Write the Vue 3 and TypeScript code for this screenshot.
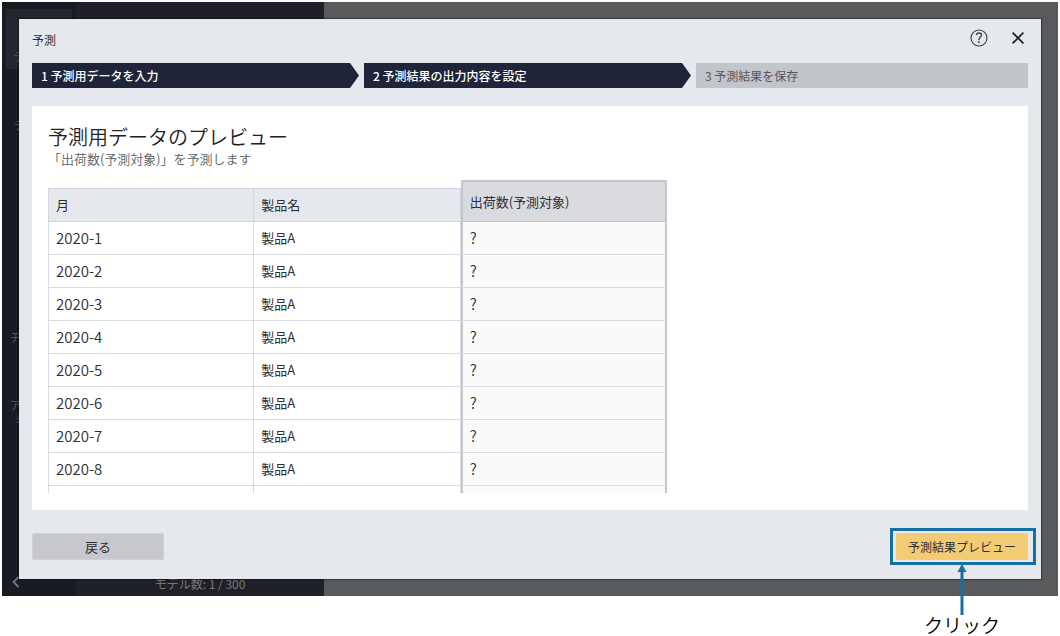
<script setup lang="ts">
interface Step {
  label: string
  done: boolean
}

interface Row {
  month: string
  product: string
  target: string
}

const steps: Step[] = [
  { label: '1 予測用データを入力', done: true },
  { label: '2 予測結果の出力内容を設定', done: true },
  { label: '3 予測結果を保存', done: false },
]

const rows: Row[] = Array.from({ length: 8 }, (_, i) => ({
  month: `2020-${i + 1}`,
  product: '製品A',
  target: '?',
}))
</script>

<template>
  <div class="page">
    <div class="stage">
      <div class="backdrop">
        <nav class="rail">
          <div class="rail-item active">デ</div>
          <div class="rail-item data">デ</div>
          <div class="rail-item team">チ</div>
          <div class="rail-item account"><span>ア</span><span class="second">ミ</span></div>
          <svg class="collapse" viewBox="0 0 8 12" width="8" height="12">
            <path d="M6.5 1 L1.5 6 L6.5 11" fill="none" stroke="#77787a" stroke-width="1.8" />
          </svg>
        </nav>
        <div class="list"><span>モデル数: 1 / 300</span></div>
        <div class="rest"></div>
      </div>

      <section class="dialog" role="dialog" aria-labelledby="dialog-title">
        <header class="head">
          <h1 id="dialog-title">予測</h1>
          <div class="tools">
            <button type="button" class="icon" aria-label="ヘルプ">
              <svg viewBox="0 0 18 18" width="18" height="18">
                <circle cx="9" cy="9" r="8" fill="none" stroke="#3c3e42" stroke-width="1.1" />
                <path
                  d="M6.4 6 C6.6 4.6 7.7 4 9 4 C10.5 4 11.5 4.8 11.5 6.1 C11.5 7.2 10.8 7.7 10.1 8.3 C9.3 9 8.9 9.5 8.9 11"
                  fill="none"
                  stroke="#3c3e42"
                  stroke-width="1.4"
                />
                <rect x="8.1" y="12.2" width="1.6" height="1.7" fill="#3c3e42" />
              </svg>
            </button>
            <button type="button" class="icon" aria-label="閉じる">
              <svg viewBox="0 0 12 12" width="12" height="12">
                <path d="M0.6 0.6 L11.4 11.4 M11.4 0.6 L0.6 11.4" stroke="#1f2024" stroke-width="1.7" />
              </svg>
            </button>
          </div>
        </header>

        <ol class="steps">
          <li v-for="step in steps" :key="step.label" :class="{ done: step.done }">{{ step.label }}</li>
        </ol>

        <main class="panel">
          <h2>予測用データのプレビュー</h2>
          <p>「出荷数(予測対象)」を予測します</p>
          <div class="preview">
            <table>
              <thead>
                <tr>
                  <th scope="col" class="first"><div>月</div></th>
                  <th scope="col"><div>製品名</div></th>
                  <th scope="col" class="target"><div>出荷数(予測対象)</div></th>
                </tr>
              </thead>
              <tbody>
                <tr v-for="row in rows" :key="row.month">
                  <td class="first month">{{ row.month }}</td>
                  <td>{{ row.product }}</td>
                  <td class="target">{{ row.target }}</td>
                </tr>
                <tr aria-hidden="true">
                  <td class="first"></td>
                  <td></td>
                  <td class="target"></td>
                </tr>
              </tbody>
            </table>
          </div>
        </main>

        <footer class="foot">
          <button type="button" class="btn">戻る</button>
          <div class="callout">
            <button type="button" class="btn primary">予測結果プレビュー</button>
            <div class="frame"></div>
            <div class="pointer">
              <svg viewBox="0 0 10 51" width="10" height="51">
                <path d="M5 0 L9.5 8 H6.5 V51 H3.5 V8 H0.5 Z" fill="#186fa3" />
              </svg>
              <span>クリック</span>
            </div>
          </div>
        </footer>
      </section>
    </div>
  </div>
</template>

<style>
body {
  margin: 0;
  background: #fff;
}
</style>

<style scoped>
* {
  box-sizing: border-box;
}

.page {
  height: 100vh;
  min-height: 400px;
  padding: 2px 2px 40px;
  font-family: 'Noto Sans CJK JP', 'Noto Sans', sans-serif;
  font-size: 13px;
  color: #2d2e32;
}

.stage {
  display: grid;
  grid-template: minmax(0, 1fr) / minmax(0, 1fr);
  height: 100%;
}

.backdrop,
.dialog {
  grid-area: 1 / 1;
}

.backdrop {
  display: flex;
  min-height: 0;
  overflow: hidden;
  color: #77787a;
}

.rail {
  display: flex;
  flex-direction: column;
  width: 74px;
  padding: 7px 4px 8px;
  background: #171b22;
  font-size: 11px;
  line-height: 14px;
  color: #5c5e62;
}

.rail-item {
  padding-left: 8px;
}

.rail-item.active {
  height: 60px;
  padding-top: 40px;
  background: #26262e;
}

.rail-item.data {
  padding-top: 49px;
}

.rail-item.team {
  padding-top: 198px;
  padding-left: 4px;
}

.rail-item.account {
  display: flex;
  flex-direction: column;
  padding-top: 54px;
  padding-left: 4px;
}

.second {
  padding-left: 4px;
}

.collapse {
  margin-top: auto;
  margin-left: 6px;
}

.list {
  display: flex;
  align-items: flex-end;
  justify-content: center;
  width: 248px;
  background: #202028;
  font-size: 12px;
  line-height: 25px;
}

.rest {
  flex: 1;
  background: #595a5c;
}

.dialog {
  display: flex;
  flex-direction: column;
  min-height: 0;
  margin: 17px;
  padding: 0 13px 19px;
  background: #e5e8ed;
  box-shadow: 0 0 1px 1px rgba(0, 0, 0, 0.35);
}

.head {
  display: flex;
  align-items: center;
  justify-content: space-between;
  height: 44px;
  padding-bottom: 2px;
}

h1 {
  margin: 0;
  font-size: 12px;
  font-weight: 400;
  line-height: 18px;
}

.tools {
  display: flex;
  align-items: center;
  gap: 24px;
  padding: 0 4px 5px 0;
}

.icon {
  display: flex;
  padding: 0;
  border: 0;
  background: none;
}

.steps {
  display: grid;
  grid-template-columns: repeat(3, 1fr);
  margin: 0;
  padding: 0;
  list-style: none;
  font-size: 12px;
  line-height: 25px;
}

.steps li {
  padding-left: 9px;
  background: #c2c5ca;
  color: #55575c;
}

.steps li.done {
  margin-right: 5px;
  background: #20243a;
  color: #fff;
  font-weight: 500;
  clip-path: polygon(0 0, calc(100% - 9px) 0, 100% 50%, calc(100% - 9px) 100%, 0 100%);
}

.panel {
  display: flex;
  flex: 1;
  flex-direction: column;
  min-height: 0;
  margin-top: 18px;
  padding: 18px 16px 17px;
  background: #fff;
}

h2 {
  margin: 0;
  font-size: 20px;
  font-weight: 350;
  line-height: 26px;
  color: #222;
}

p {
  margin: 0;
  font-weight: 350;
  line-height: 17px;
  color: #5c5e62;
}

.preview {
  flex: 1;
  min-height: 0;
  margin-top: 13px;
  overflow: hidden;
}

table {
  width: 619px;
  border-collapse: separate;
  border-spacing: 0;
  table-layout: fixed;
}

th {
  height: 41px;
  padding: 0;
  font-weight: 400;
  text-align: left;
  vertical-align: bottom;
}

th div {
  height: 34px;
  padding-left: 7px;
  border: solid #d3d6de;
  border-width: 1px 1px 1px 0;
  background: #e5e8ed;
  line-height: 32px;
}

th.first div {
  border-left-width: 1px;
}

th.target div {
  height: 42px;
  border: solid #c5c6cd;
  border-width: 2px 2px 1px;
  background: #dadbe0;
  line-height: 40px;
}

td {
  height: 33px;
  padding: 0 7px;
  border: solid #d8dbe1;
  border-width: 0 1px 1px 0;
  line-height: 32px;
}

td.first {
  border-left-width: 1px;
}

td.month {
  font-size: 15px;
  font-weight: 350;
}

td.target {
  border-right: 2px solid #c5c6cd;
  border-left: 2px solid #c5c6cd;
  background: #fafafa;
  font-size: 15px;
  font-weight: 350;
}

.foot {
  display: flex;
  justify-content: space-between;
  margin-top: 23px;
}

.btn {
  display: block;
  width: 132px;
  height: 27px;
  padding: 0;
  border: 1px solid #cfd0d5;
  border-radius: 2px;
  background: #c7c8cd;
  color: #2d2e32;
  font: inherit;
}

.btn.primary {
  border-color: #f3cc74;
  background: #f3cb73;
  font-size: 12px;
}

.callout {
  position: relative;
}

.frame {
  position: absolute;
  inset: -5px -8px -5px -6px;
  border: 3px solid #186fa3;
  pointer-events: none;
}

.pointer {
  position: absolute;
  top: 100%;
  left: 50%;
  display: flex;
  flex-direction: column;
  align-items: center;
  padding-top: 4px;
  transform: translateX(-50%);
  font-size: 19px;
  font-weight: 350;
  line-height: 20px;
  white-space: nowrap;
  color: #000;
  pointer-events: none;
}
</style>
